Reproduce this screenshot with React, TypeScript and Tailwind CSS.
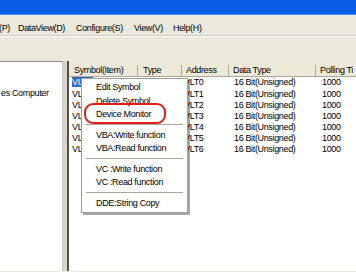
import React from 'react'

const font = { fontFamily: '"Liberation Sans", Arial, sans-serif' }

const rows = ['VLT0', 'VLT1', 'VLT2', 'VLT3', 'VLT4', 'VLT5', 'VLT6']

type Item = { label: string } | { sep: true }

const menu: Item[] = [
  { label: 'Edit Symbol' },
  { label: 'Delete Symbol' },
  { label: 'Device Monitor' },
  { sep: true },
  { label: 'VBA:Write function' },
  { label: 'VBA:Read function' },
  { sep: true },
  { label: 'VC :Write function' },
  { label: 'VC :Read function' },
  { sep: true },
  { label: 'DDE:String Copy' },
]

export default function App() {
  return (
    <div className="relative w-[356px] h-[272px] overflow-hidden bg-[#ebe8dc] text-black text-[9px] tracking-[-0.35px]" style={font}>
      {/* title bar */}
      <div className="h-[15px] bg-[#0b5ce6] border-b border-[#4a8ef5]" />

      {/* menu bar */}
      <div className="h-[21px] flex items-center pt-[8px] border-b border-[#cfcbbb]">
        <span className="w-[19px] -ml-[1px]">(P)</span>
        <span className="w-[58px]">DataView(D)</span>
        <span className="w-[58px]">Configure(S)</span>
        <span className="w-[39px]">View(V)</span>
        <span>Help(H)</span>
      </div>
      <div className="h-[25px] border-t border-white" />

      {/* main */}
      <div className="flex h-[210px]">
        <div className="w-[63px] shrink-0 bg-white border-t border-[#8a8a8a] border-r border-r-[#c8c8c8]">
          <div className="pl-[1px] pt-[25px]">es Computer</div>
        </div>
        <div className="w-[4px] shrink-0 bg-[#d8d5c8]" />
        <div className="flex-1 min-w-0 overflow-hidden bg-white border-l-2 border-[#505050]">
          <div className="flex h-[16px] items-center pt-[4px] bg-[#ece9d8] border-b border-[#aca899]">
            <div className="w-[69px] shrink-0 h-full flex items-center pl-[5px] border-r border-[#aca899]">Symbol(Item)</div>
            <div className="w-[44px] shrink-0 h-full flex items-center pl-[5px] border-r border-[#aca899]">Type</div>
            <div className="w-[47px] shrink-0 h-full flex items-center pl-[4px] border-r border-[#aca899]">Address</div>
            <div className="w-[87px] shrink-0 h-full flex items-center pl-[4px] border-r border-[#aca899]">Data Type</div>
            <div className="flex-1 h-full flex items-center pl-[4px] whitespace-nowrap overflow-hidden">Polling Ti</div>
          </div>
          {rows.map((r, i) => (
            <div key={r} className="flex h-[11.2px] items-center pt-[1px] whitespace-nowrap">
              <div className="w-[69px] shrink-0 pl-[3px]">
                <span className={i === 0 ? 'bg-[#316ac5] text-white pr-[2px]' : ''}>{r}</span>
              </div>
              <div className="w-[44px] shrink-0" />
              <div className="w-[47px] shrink-0 pl-[2px]">{r}</div>
              <div className="w-[87px] shrink-0 pl-[5px]">16 Bit(Unsigned)</div>
              <div className="flex-1 pl-[6px]">1000</div>
            </div>
          ))}
        </div>
      </div>

      {/* context menu */}
      <div className="absolute left-[81px] top-[78px] w-[107px] bg-white border border-[#9d9d9d] shadow-[2px_2px_0_rgba(0,0,0,0.35)] py-[2px]">
        {menu.map((m, i) =>
          'sep' in m ? (
            <div key={i} className="h-[7px] flex items-center px-[4px]">
              <div className="w-full border-t border-[#aca899] border-b border-b-white" />
            </div>
          ) : (
            <div key={i} className="h-[13.5px] flex items-center pl-[14px] whitespace-nowrap">
              {m.label}
            </div>
          )
        )}
      </div>

      {/* red mark */}
      <div className="absolute left-[84px] top-[103px] w-[82px] h-[21px] rounded-[9px] border-[2.5px] border-[#e21b1b]" />
    </div>
  )
}
